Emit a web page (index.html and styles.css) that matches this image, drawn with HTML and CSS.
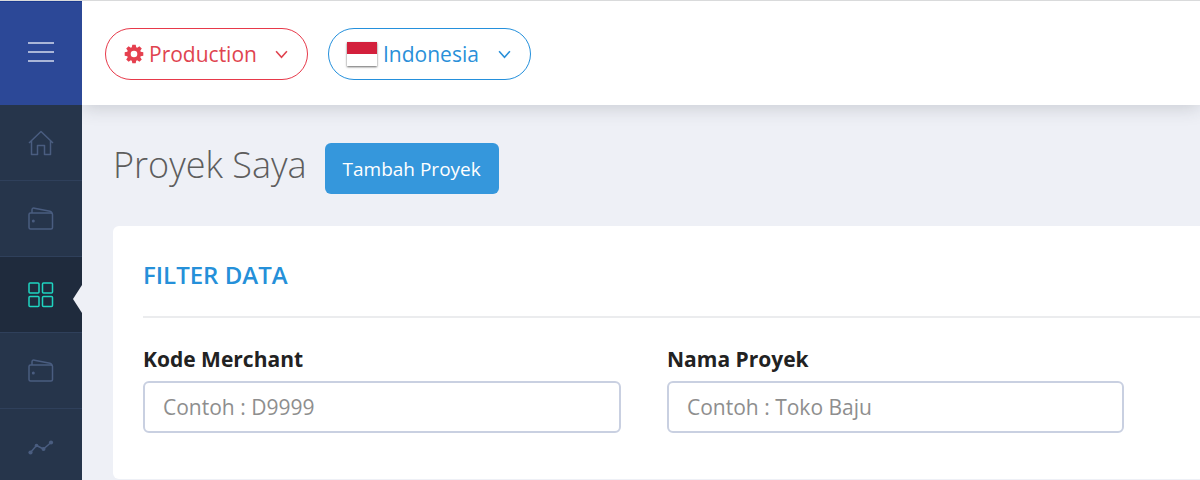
FILE: index.html
```html
<!DOCTYPE html>
<html lang="id">
<head>
<meta charset="utf-8">
<meta name="viewport" content="width=device-width, initial-scale=1">
<title>Proyek Saya</title>
<link rel="stylesheet" href="styles.css">
</head>
<body>
<div class="shell">
  <aside class="sidebar">
    <button class="menu-toggle" type="button" aria-label="Menu"><span class="bars"></span></button>
    <nav class="nav">
      <a class="nav-item" href="#" aria-label="Beranda">
        <svg class="icon" viewBox="0 0 26 26"><path d="M1 13 13 1.500 25 13M3.500 11V24.500H9.500V15.500H16.500V24.500H22.500V11"/></svg>
      </a>
      <a class="nav-item" href="#" aria-label="Dompet">
        <svg class="icon" viewBox="0 0 26 26"><rect x="1" y="7" width="23.500" height="16" rx="1.500"/><path d="M4 7V4Q4 1.700 6.500 2.200L22 5.200Q24 5.600 24 8"/><circle class="dot" cx="5.300" cy="15" r="1.500"/></svg>
      </a>
      <a class="nav-item active" href="#" aria-label="Proyek" aria-current="page">
        <svg class="icon" viewBox="0 0 26 26"><rect x="1" y="1" width="10" height="10" rx="1"/><rect x="14.500" y="1" width="10" height="10" rx="1"/><rect x="1" y="14.500" width="10" height="10" rx="1"/><rect x="14.500" y="14.500" width="10" height="10" rx="1"/></svg>
      </a>
      <a class="nav-item" href="#" aria-label="Penarikan">
        <svg class="icon" viewBox="0 0 26 26"><rect x="1" y="7" width="23.500" height="16" rx="1.500"/><path d="M4 7V4Q4 1.700 6.500 2.200L22 5.200Q24 5.600 24 8"/><circle class="dot" cx="5.300" cy="15" r="1.500"/></svg>
      </a>
      <a class="nav-item" href="#" aria-label="Laporan">
        <svg class="icon" viewBox="0 0 26 26"><path d="M2.500 18.500 8.500 11.500 15.500 15 23 8.500"/><g class="dot"><circle cx="2.500" cy="18.500" r="2.100"/><circle cx="8.500" cy="11.500" r="1.800"/><circle cx="15.500" cy="15" r="2"/><circle cx="23" cy="8.500" r="2.100"/></g></svg>
      </a>
    </nav>
  </aside>
  <div class="page">
    <header class="topbar">
      <button class="pill pill-red" type="button">
        <svg class="gear" viewBox="-10 -10 20 20"><path fill-rule="evenodd" d="M-1.700-9.300H1.700L2.200-6.700 3.200-6.300 5.400-7.800 7.800-5.400 6.300-3.200 6.700-2.200 9.300-1.700V1.700L6.700 2.200 6.300 3.200 7.800 5.400 5.400 7.800 3.200 6.300 2.200 6.700 1.700 9.300H-1.700L-2.200 6.700-3.200 6.300-5.400 7.800-7.800 5.400-6.300 3.200-6.700 2.200-9.300 1.700V-1.700L-6.700-2.200-6.300-3.200-7.800-5.400-5.400-7.800-3.200-6.300-2.200-6.700ZM0-3.300A3.300 3.300 0 1 0 0 3.300 3.300 3.300 0 1 0 0-3.300Z"/></svg>
        <span>Production</span>
        <svg class="chevron" viewBox="0 0 12 8"><path d="M1 1 6 6.500 11 1"/></svg>
      </button>
      <button class="pill pill-blue" type="button">
        <span class="flag"></span>
        <span>Indonesia</span>
        <svg class="chevron" viewBox="0 0 12 8"><path d="M1 1 6 6.500 11 1"/></svg>
      </button>
    </header>
    <main class="content">
      <div class="heading">
        <h1 class="title">Proyek Saya</h1>
        <button class="add" type="button">Tambah Proyek</button>
      </div>
      <section class="panel">
        <h2 class="panel-title">FILTER DATA</h2>
        <form class="fields">
          <div class="field">
            <label for="kode">Kode Merchant</label>
            <input id="kode" type="text" placeholder="Contoh : D9999">
          </div>
          <div class="field">
            <label for="nama">Nama Proyek</label>
            <input id="nama" type="text" placeholder="Contoh : Toko Baju">
          </div>
        </form>
      </section>
    </main>
  </div>
</div>
</body>
</html>
```
FILE: styles.css
```css
* { box-sizing: border-box; }
body {
  margin: 0;
  background: #eef0f6;
  color: #222;
  font-family: "Open Sans", "Noto Sans", sans-serif;
}
button, input { font: inherit; }
.shell {
  display: flex;
  height: 100vh;
  border-top: 1px solid #d9dadb;
  overflow: hidden;
}
.sidebar {
  position: relative;
  z-index: 1;
  flex: none;
  width: 82px;
  background: #26354b;
}
.menu-toggle {
  display: flex;
  align-items: center;
  justify-content: center;
  width: 100%;
  height: 104px;
  padding: 0 0 4px;
  border: 0;
  border-top: 1px solid #1b3a8f;
  background: #2c4897;
}
.bars {
  width: 26px;
  height: 20px;
  border-top: 2px solid #aab6d8;
  border-bottom: 2px solid #aab6d8;
  background: linear-gradient(#aab6d8, #aab6d8) center / 100% 2px no-repeat;
}
.nav-item {
  position: relative;
  display: flex;
  align-items: center;
  justify-content: center;
  height: 76px;
  border-bottom: 1px solid #2f405b;
  color: #4a5d80;
}
.nav-item.active { background: #1f2b3d; color: #1fd5c1; }
.nav-item.active::after {
  content: "";
  position: absolute;
  top: 28px;
  right: 0;
  border: solid transparent;
  border-width: 14px 9px 14px 0;
  border-right-color: #eef0f6;
}
.icon {
  width: 26px;
  height: 26px;
  fill: none;
  stroke: currentColor;
  stroke-width: 1.5;
  stroke-linejoin: round;
}
.dot { fill: currentColor; stroke: none; }
.page {
  flex: 1;
  min-width: 0;
}
.topbar {
  display: flex;
  align-items: center;
  gap: 20px;
  height: 104px;
  padding: 2px 23px 0;
  background: #fff;
  box-shadow: 0 2px 18px rgba(40, 45, 55, 0.2);
}
.pill {
  display: flex;
  align-items: center;
  height: 52px;
  width: 203px;
  padding: 0 19px 0 18px;
  border: 1px solid;
  border-radius: 26px;
  background: #fff;
  font-size: 21px;
}
.pill-red { border-color: #e7394a; color: #e04450; }
.pill-blue { border-color: #2490dc; color: #2a90d9; }
.gear {
  width: 20px;
  height: 20px;
  margin-right: 5px;
  fill: #e5404f;
}
.flag {
  width: 30px;
  height: 24px;
  margin-right: 6px;
  background: linear-gradient(#d3203c 0 12px, #fff 12px);
  box-shadow: 0 1px 2px rgba(0, 0, 0, 0.6);
}
.chevron {
  width: 13px;
  height: 9px;
  margin-left: auto;
  fill: none;
  stroke: currentColor;
  stroke-width: 1.5;
}
.content { padding: 38px 0 0 31px; }
.heading {
  display: flex;
  align-items: center;
  gap: 18px;
}
.title {
  margin: 0;
  padding-bottom: 8px;
  color: #5d5d5d;
  font-size: 36px;
  font-weight: 300;
  line-height: 43px;
}
.add {
  height: 51px;
  padding: 0 18px;
  border: 0;
  border-radius: 6px;
  background: #3597dc;
  color: #fff;
  font-size: 19px;
}
.panel {
  margin-top: 32px;
  padding: 32px 0 46px 30px;
  border-radius: 6px 0 0 6px;
  background: #fff;
}
.panel-title {
  margin: 0;
  padding-bottom: 24px;
  border-bottom: 2px solid #ebecee;
  color: #2590d9;
  font-size: 24px;
  font-weight: 600;
  line-height: 34px;
}
.fields {
  display: grid;
  grid-template-columns: 478fr 457fr;
  gap: 46px;
  padding: 27px 76px 0 0;
}
.field {
  display: flex;
  flex-direction: column;
  gap: 8px;
}
.field label {
  font-size: 21px;
  font-weight: 700;
  line-height: 28px;
}
.field input {
  width: 100%;
  height: 52px;
  padding: 0 18px;
  border: 2px solid #c9d0e1;
  border-radius: 6px;
  background: #fff;
  color: #444;
  font-size: 21px;
}
.field input::placeholder { color: #8e8e8e; opacity: 1; }
```
